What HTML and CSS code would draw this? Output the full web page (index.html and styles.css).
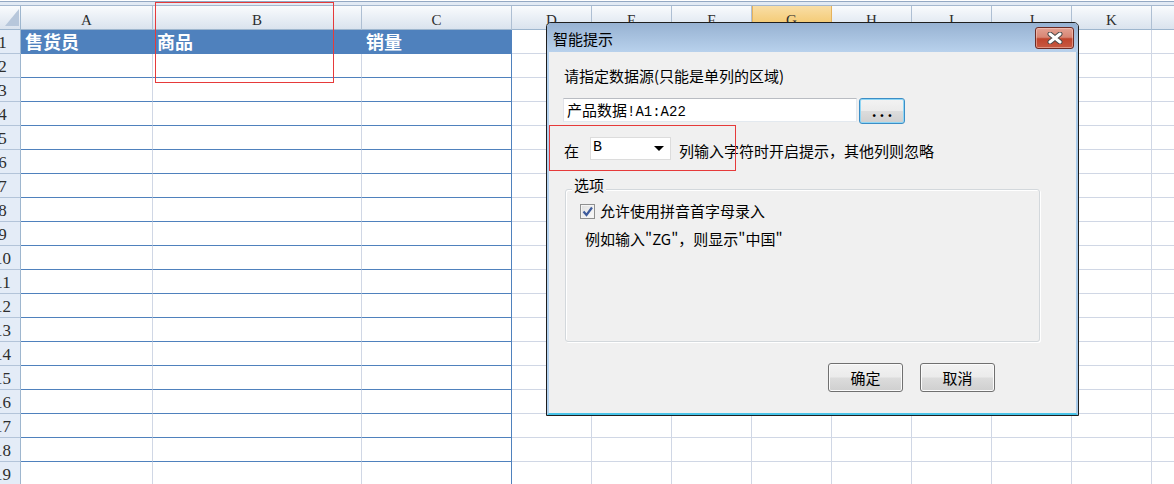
FILE: index.html
```html
<!DOCTYPE html>
<html lang="zh">
<head>
<meta charset="utf-8">
<title>智能提示</title>
<link rel="stylesheet" href="styles.css">
</head>
<body>
<div class="sheet">
  <div class="topbar"></div>
  <div class="row hdr">
    <div class="corner"><svg width="20" height="23" viewBox="0 0 20 23"><polygon points="19,3 19,20 5,20" fill="#b7c7db"/></svg></div>
    <div class="ch">A</div><div class="ch">B</div><div class="ch">C</div><div class="ch">D</div><div class="ch">E</div><div class="ch">F</div><div class="ch sel">G</div><div class="ch">H</div><div class="ch">I</div><div class="ch">J</div><div class="ch">K</div><div class="ch"></div>
  </div>
  <div class="row"><div class="rh"><span>1</span></div><div class="th">售货员</div><div class="th">商品</div><div class="th tl">销量</div><div></div><div></div><div></div><div></div><div></div><div></div><div></div><div></div><div></div></div>
  <div class="row"><div class="rh"><span>2</span></div><div class="tc"></div><div class="tc"></div><div class="tc tl"></div><div></div><div></div><div></div><div></div><div></div><div></div><div></div><div></div><div></div></div>
  <div class="row"><div class="rh"><span>3</span></div><div class="tc"></div><div class="tc"></div><div class="tc tl"></div><div></div><div></div><div></div><div></div><div></div><div></div><div></div><div></div><div></div></div>
  <div class="row"><div class="rh"><span>4</span></div><div class="tc"></div><div class="tc"></div><div class="tc tl"></div><div></div><div></div><div></div><div></div><div></div><div></div><div></div><div></div><div></div></div>
  <div class="row"><div class="rh"><span>5</span></div><div class="tc"></div><div class="tc"></div><div class="tc tl"></div><div></div><div></div><div></div><div></div><div></div><div></div><div></div><div></div><div></div></div>
  <div class="row"><div class="rh"><span>6</span></div><div class="tc"></div><div class="tc"></div><div class="tc tl"></div><div></div><div></div><div></div><div></div><div></div><div></div><div></div><div></div><div></div></div>
  <div class="row"><div class="rh"><span>7</span></div><div class="tc"></div><div class="tc"></div><div class="tc tl"></div><div></div><div></div><div></div><div></div><div></div><div></div><div></div><div></div><div></div></div>
  <div class="row"><div class="rh"><span>8</span></div><div class="tc"></div><div class="tc"></div><div class="tc tl"></div><div></div><div></div><div></div><div></div><div></div><div></div><div></div><div></div><div></div></div>
  <div class="row"><div class="rh"><span>9</span></div><div class="tc"></div><div class="tc"></div><div class="tc tl"></div><div></div><div></div><div></div><div></div><div></div><div></div><div></div><div></div><div></div></div>
  <div class="row"><div class="rh"><span>10</span></div><div class="tc"></div><div class="tc"></div><div class="tc tl"></div><div></div><div></div><div></div><div></div><div></div><div></div><div></div><div></div><div></div></div>
  <div class="row"><div class="rh"><span>11</span></div><div class="tc"></div><div class="tc"></div><div class="tc tl"></div><div></div><div></div><div></div><div></div><div></div><div></div><div></div><div></div><div></div></div>
  <div class="row"><div class="rh"><span>12</span></div><div class="tc"></div><div class="tc"></div><div class="tc tl"></div><div></div><div></div><div></div><div></div><div></div><div></div><div></div><div></div><div></div></div>
  <div class="row"><div class="rh"><span>13</span></div><div class="tc"></div><div class="tc"></div><div class="tc tl"></div><div></div><div></div><div></div><div></div><div></div><div></div><div></div><div></div><div></div></div>
  <div class="row"><div class="rh"><span>14</span></div><div class="tc"></div><div class="tc"></div><div class="tc tl"></div><div></div><div></div><div></div><div></div><div></div><div></div><div></div><div></div><div></div></div>
  <div class="row"><div class="rh"><span>15</span></div><div class="tc"></div><div class="tc"></div><div class="tc tl"></div><div></div><div></div><div></div><div></div><div></div><div></div><div></div><div></div><div></div></div>
  <div class="row"><div class="rh"><span>16</span></div><div class="tc"></div><div class="tc"></div><div class="tc tl"></div><div></div><div></div><div></div><div></div><div></div><div></div><div></div><div></div><div></div></div>
  <div class="row"><div class="rh"><span>17</span></div><div class="tc"></div><div class="tc"></div><div class="tc tl"></div><div></div><div></div><div></div><div></div><div></div><div></div><div></div><div></div><div></div></div>
  <div class="row"><div class="rh"><span>18</span></div><div class="tc"></div><div class="tc"></div><div class="tc tl"></div><div></div><div></div><div></div><div></div><div></div><div></div><div></div><div></div><div></div></div>
  <div class="row"><div class="rh"><span>19</span></div><div class="tc"></div><div class="tc"></div><div class="tc tl"></div><div></div><div></div><div></div><div></div><div></div><div></div><div></div><div></div><div></div></div>
</div>

<div class="mark mark-col"></div>

<div class="dialog">
  <div class="titlebar">
    <span class="title">智能提示</span>
    <button class="close" aria-label="关闭"><svg width="16" height="12" viewBox="0 0 16 12"><path d="M3 2 L13 10 M13 2 L3 10" stroke="#4a4a4a" stroke-width="5" stroke-linecap="round" fill="none"/><path d="M3 2 L13 10 M13 2 L3 10" stroke="#ffffff" stroke-width="3" stroke-linecap="round" fill="none"/></svg></button>
  </div>
  <div class="client">
    <div class="label">请指定数据源(只能是单列的区域)</div>
    <div class="srcrow">
      <div class="input">产品数据<span class="mono">!A1:A22</span></div>
      <button class="btn browse">...</button>
    </div>
    <div class="colrow">
      <span class="txt">在</span>
      <div class="combo"><span class="mono">B</span><svg width="10" height="5" viewBox="0 0 10 5"><polygon points="0,0 10,0 5,5" fill="#000"/></svg></div>
      <span class="txt">列输入字符时开启提示，其他列则忽略</span>
    </div>
    <div class="group">
      <div class="legend">选项</div>
      <div class="check">
        <span class="box"><svg width="13" height="13" viewBox="0 0 13 13"><path d="M2.5 6.5 L5.5 10 L11 2.5" stroke="#3d5b9c" stroke-width="2.2" fill="none"/></svg></span>
        <span>允许使用拼音首字母录入</span>
      </div>
      <div class="example">例如输入"ZG"，则显示"中国"</div>
    </div>
    <div class="actions">
      <button class="btn act">确定</button>
      <button class="btn act">取消</button>
    </div>
  </div>
</div>

<div class="mark mark-dlg"></div>
</body>
</html>
```

FILE: styles.css
```css
html, body {
  margin: 0;
  padding: 0;
}

body {
  width: 1174px;
  height: 484px;
  overflow: hidden;
  position: relative;
  background: #ffffff;
  font-family: "Noto Sans CJK SC", sans-serif;
}

.sheet {
  width: 1174px;
  overflow: hidden;
}

.topbar {
  height: 3px;
  margin-top: 1px;
  border-top: 1px solid #93a8c3;
  border-bottom: 1px solid #a5b8cf;
  background: #e2eaf4;
}

.row {
  display: grid;
  grid-template-columns: 21px 132px 209px 150px repeat(8, 80px) 23px;
  height: 24px;
}

.row > div {
  box-sizing: border-box;
  border-right: 1px solid #d0d7e5;
  border-bottom: 1px solid #d0d7e5;
  overflow: hidden;
}

/* column header row */
.hdr > div {
  background: linear-gradient(#f9fbfd, #dae3ee);
  border-right-color: #aebfd3;
  border-bottom-color: #9eb6ce;
}

.hdr .corner {
  border-right-color: #9eb6ce;
}

.corner svg {
  display: block;
}

.ch {
  text-align: center;
  font-family: "Liberation Serif", serif;
  font-size: 15px;
  line-height: 20px;
  padding-top: 4px;
  color: #2e2e2e;
}

.hdr .sel {
  background: linear-gradient(#f9dea6, #f2c465);
  border-right-color: #e5b25c;
  box-shadow: inset 1px 0 #e5b25c;
}

/* row header */
.row > .rh {
  background: #e4ecf7;
  border-right-color: #9eb6ce;
  border-bottom-color: #b3c4d9;
}

.rh span {
  display: block;
  width: 35px;
  margin-left: -15px;
  text-align: center;
  font-family: "Liberation Serif", serif;
  font-size: 17px;
  line-height: 20px;
  padding-top: 3px;
  color: #2e2e2e;
}

/* table */
.row > .th {
  background: #4f81bd;
  border-color: #4f81bd;
  color: #ffffff;
  font-weight: 700;
  font-size: 18px;
  line-height: 23px;
  padding-left: 4px;
  overflow: visible;
}

.row > .tc {
  border-bottom-color: #4f81bd;
}

.row > .tl {
  border-right-color: #4f81bd;
}

/* red annotation boxes */
.mark {
  position: absolute;
  box-sizing: border-box;
  border: 1px solid #e63a3a;
  z-index: 5;
}

.mark-col {
  left: 155px;
  top: 2px;
  width: 179px;
  height: 81px;
}

.mark-dlg {
  left: 549px;
  top: 125px;
  width: 187px;
  height: 46px;
}

/* dialog */
.dialog {
  position: absolute;
  left: 546px;
  top: 22px;
  width: 533px;
  height: 394px;
  box-sizing: border-box;
  border: 1px solid #1e1e1e;
  border-radius: 5px 5px 0 0;
  overflow: hidden;
  display: flex;
  flex-direction: column;
  z-index: 4;
  font-size: 15px;
  color: #000;
}

.titlebar {
  height: 29px;
  flex: none;
  display: flex;
  align-items: center;
  justify-content: space-between;
  padding: 0 4px 0 6px;
  background: linear-gradient(#97b2d2, #b8d1ec);
}

.title {
  padding-top: 3px;
  line-height: 20px;
}

.close {
  width: 39px;
  height: 22px;
  padding: 0;
  margin: 0;
  box-sizing: border-box;
  border: 1px solid #6d2b24;
  border-radius: 3px;
  background: linear-gradient(#e3a193 0%, #d88674 46%, #c0442d 54%, #c85a42 100%);
  box-shadow: inset 0 0 0 1px rgba(255, 220, 210, 0.45);
  display: flex;
  align-items: center;
  justify-content: center;
}

.close svg {
  display: block;
}

.client {
  flex: 1;
  background: #f0f0f0;
  border-left: 2px solid #b3d1ee;
  border-right: 2px solid #a8cae9;
  border-bottom: 2px solid #48c3e8;
  padding: 14px 0 0 15px;
}

.label {
  line-height: 20px;
}

.srcrow {
  display: flex;
  align-items: flex-start;
  margin-top: 12px;
  height: 26px;
}

.input {
  width: 294px;
  height: 24px;
  box-sizing: border-box;
  margin-left: -1px;
  background: #fff;
  border: 1px solid;
  border-color: #b9bcc2 #e3e9ef #e3e9ef #e2e3ea;
  padding-left: 3px;
  line-height: 22px;
  font-size: 15px;
}

.mono {
  font-family: "Liberation Mono", monospace;
  font-size: 14px;
}

.btn {
  box-sizing: border-box;
  margin: 0;
  padding: 0;
  font-family: "Noto Sans CJK SC", sans-serif;
  font-size: 15px;
  color: #000;
  border: 1px solid #707070;
  border-radius: 3px;
  background: linear-gradient(#f3f3f3 0%, #ebebeb 48%, #dcdcdc 52%, #cfcfcf 100%);
  box-shadow: inset 0 0 0 1px #fbfbfb;
}

.browse {
  width: 46px;
  height: 26px;
  margin-left: 2px;
  border-color: #3c8ec6;
  box-shadow: inset 0 0 0 1px #8fd6f5;
  font-weight: 700;
  letter-spacing: 3px;
  padding-left: 3px;
  line-height: 20px;
}

.colrow {
  display: flex;
  align-items: center;
  margin-top: 12px;
  height: 24px;
}

.txt {
  line-height: 20px;
  padding-top: 5px;
}

.combo {
  width: 81px;
  height: 23px;
  box-sizing: border-box;
  margin: 0 8px 0 11px;
  background: #fff;
  border: 1px solid #dcdcdc;
  display: flex;
  align-items: center;
  justify-content: space-between;
  padding: 0 6px 0 2px;
}

.combo .mono {
  font-size: 15px;
  line-height: 20px;
}

.combo svg {
  display: block;
}

.group {
  width: 475px;
  height: 153px;
  box-sizing: border-box;
  margin: 29px 0 0 1px;
  border: 1px solid #d3d8dc;
  border-radius: 3px;
  box-shadow: inset 1px 1px 0 #ffffff, 1px 1px 0 #ffffff;
}

.legend {
  width: fit-content;
  margin: -14px 0 0 6px;
  padding: 0 2px;
  background: #f0f0f0;
  line-height: 18px;
}

.check {
  display: flex;
  align-items: center;
  margin: 7px 0 0 14px;
  height: 20px;
}

.box {
  width: 15px;
  height: 15px;
  box-sizing: border-box;
  border: 1px solid #8e8f8f;
  background: linear-gradient(135deg, #dedede, #fbfbfb);
  box-shadow: inset 0 0 0 1px #f4f4f4;
  margin-right: 5px;
  display: flex;
  align-items: center;
  justify-content: center;
}

.box svg {
  display: block;
}

.check span:last-child {
  line-height: 20px;
}

.example {
  margin: 8px 0 0 19px;
  line-height: 20px;
}

.actions {
  display: flex;
  justify-content: flex-end;
  gap: 17px;
  margin-top: 21px;
  padding-right: 81px;
}

.act {
  width: 75px;
  height: 29px;
}
```
